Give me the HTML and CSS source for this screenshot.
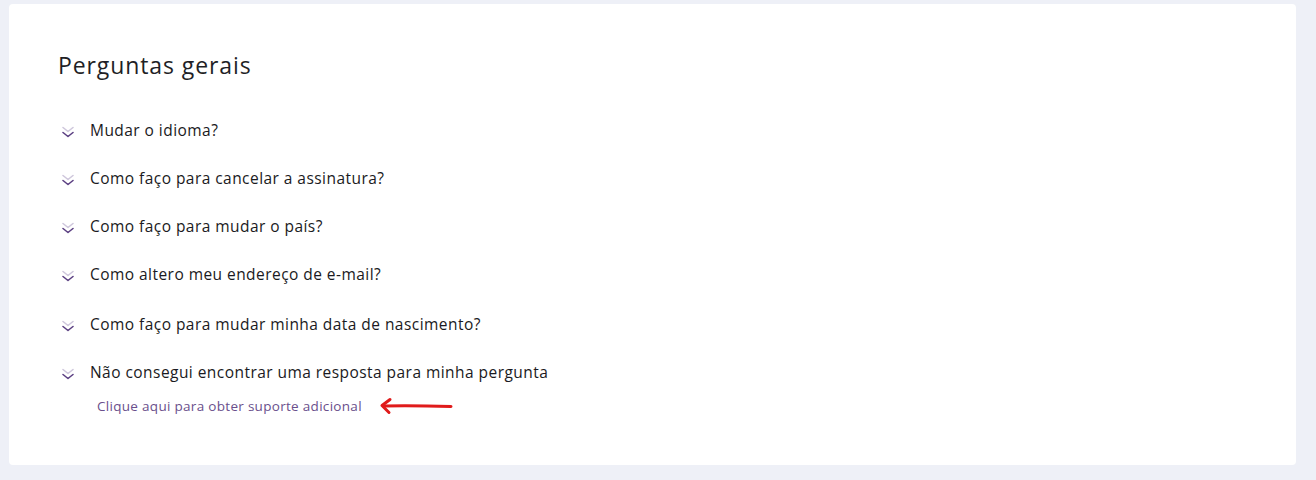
FILE: index.html
```html
<!DOCTYPE html>
<html lang="pt">
<head>
<meta charset="utf-8">
<link rel="stylesheet" href="styles.css">
</head>
<body>
<main class="card">
  <h1 class="title">Perguntas gerais</h1>
  <ul class="faq">
    <li class="item"><span class="chev"><svg width="14" height="14" viewBox="0 0 14 14"><path d="M2 2.5 7 6.5 12 2.5" class="c1"/><path d="M2 7.5 7 11.5 12 7.5" class="c2"/></svg></span><span class="q">Mudar o idioma?</span></li>
    <li class="item"><span class="chev"><svg width="14" height="14" viewBox="0 0 14 14"><path d="M2 2.5 7 6.5 12 2.5" class="c1"/><path d="M2 7.5 7 11.5 12 7.5" class="c2"/></svg></span><span class="q">Como faço para cancelar a assinatura?</span></li>
    <li class="item"><span class="chev"><svg width="14" height="14" viewBox="0 0 14 14"><path d="M2 2.5 7 6.5 12 2.5" class="c1"/><path d="M2 7.5 7 11.5 12 7.5" class="c2"/></svg></span><span class="q">Como faço para mudar o país?</span></li>
    <li class="item"><span class="chev"><svg width="14" height="14" viewBox="0 0 14 14"><path d="M2 2.5 7 6.5 12 2.5" class="c1"/><path d="M2 7.5 7 11.5 12 7.5" class="c2"/></svg></span><span class="q">Como altero meu endereço de e-mail?</span></li>
    <li class="item item-gap"><span class="chev"><svg width="14" height="14" viewBox="0 0 14 14"><path d="M2 2.5 7 6.5 12 2.5" class="c1"/><path d="M2 7.5 7 11.5 12 7.5" class="c2"/></svg></span><span class="q">Como faço para mudar minha data de nascimento?</span></li>
    <li class="item"><span class="chev"><svg width="14" height="14" viewBox="0 0 14 14"><path d="M2 2.5 7 6.5 12 2.5" class="c1"/><path d="M2 7.5 7 11.5 12 7.5" class="c2"/></svg></span><span class="q">Não consegui encontrar uma resposta para minha pergunta</span></li>
  </ul>
  <div class="support">
    <a class="link" href="#">Clique aqui para obter suporte adicional</a>
    <svg class="arrow" width="76" height="18" viewBox="0 0 76 18"><path d="M73 9.5 C55 9 30 8.5 6 9" /><path d="M12 2.5 4 8.5 11 15.5"/></svg>
  </div>
</main>
</body>
</html>
```
FILE: styles.css
```css
html, body {
  margin: 0;
  padding: 0;
}
body {
  background: #eef0f7;
  font-family: "Open Sans", "Liberation Sans", sans-serif;
  color: #1a1a22;
  padding: 4px 20px 15px 9px;
  height: 480px;
  box-sizing: border-box;
}
.card {
  background: #ffffff;
  border-radius: 4px;
  width: 1287px;
  height: 461px;
  box-sizing: border-box;
  padding: 46px 49px 0 49px;
}
.title {
  margin: 0 0 26px 0;
  font-size: 23px;
  font-weight: 400;
  letter-spacing: 0.9px;
  line-height: 30px;
  color: #1f1f26;
}
.faq {
  list-style: none;
  margin: 0;
  padding: 0 0 0 4px;
}
.item {
  display: flex;
  align-items: center;
  height: 48px;
  font-size: 15.5px;
  letter-spacing: 0.45px;
}
.item-gap {
  margin-top: 2px;
}
.chev {
  display: flex;
  width: 14px;
  height: 14px;
  margin-right: 14px;
  margin-top: 4px;
  margin-left: -1px;
}
.chev path {
  fill: none;
  stroke-width: 1.6;
  stroke-linecap: round;
  stroke-linejoin: round;
}
.c1 { stroke: #cfc7dc; }
.c2 { stroke: #5b3f82; }
.q {
  line-height: 20px;
  margin-left: 1px;
}
.support {
  display: flex;
  align-items: center;
  padding-left: 39px;
  margin-top: 1px;
}
.link {
  color: #6a4f8c;
  text-decoration: none;
  font-size: 13.5px;
  letter-spacing: 0.3px;
  line-height: 18px;
}
.arrow {
  margin-left: 16px;
}
.arrow path {
  fill: none;
  stroke: #e01b1b;
  stroke-width: 3;
  stroke-linecap: round;
  stroke-linejoin: round;
}
```
